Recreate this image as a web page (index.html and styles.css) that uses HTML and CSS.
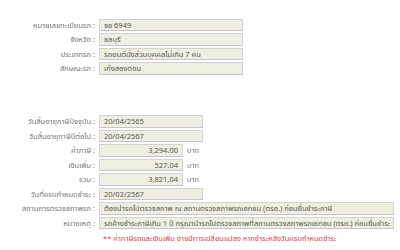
FILE: index.html
```html
<!DOCTYPE html>
<html>
<head>
<meta charset="utf-8">
<link rel="stylesheet" href="styles.css">
</head>
<body>
<div class="form">
  <div class="section first">
    <div class="row"><span class="label">หมายเลขทะเบียนรถ :</span><span class="box w144">จช 6949</span></div>
    <div class="row"><span class="label">จังหวัด :</span><span class="box w144">ชลบุรี</span></div>
    <div class="row"><span class="label">ประเภทรถ :</span><span class="box w144">รถยนต์นั่งส่วนบุคคลไม่เกิน 7 คน</span></div>
    <div class="row"><span class="label">ลักษณะรถ :</span><span class="box w144">เก๋งสองตอน</span></div>
  </div>
  <div class="section second">
    <div class="row"><span class="label">วันสิ้นอายุภาษีปัจจุบัน :</span><span class="box w104">20/04/2565</span></div>
    <div class="row"><span class="label">วันสิ้นอายุภาษีปีต่อไป :</span><span class="box w104">20/04/2567</span></div>
    <div class="row"><span class="label">ค่าภาษี :</span><span class="box w84 num">3,294.00</span><span class="unit">บาท</span></div>
    <div class="row"><span class="label">เงินเพิ่ม :</span><span class="box w84 num">527.04</span><span class="unit">บาท</span></div>
    <div class="row"><span class="label">รวม :</span><span class="box w84 num">3,821.04</span><span class="unit">บาท</span></div>
    <div class="row"><span class="label">วันที่ครบกำหนดชำระ :</span><span class="box w104">20/02/2567</span></div>
    <div class="row"><span class="label">สถานการตรวจสภาพรถ :</span><span class="box wide">ต้องนำรถไปตรวจสภาพ ณ สถานตรวจสภาพรถเอกชน (ตรอ.) ก่อนยื่นชำระภาษี</span></div>
    <div class="row"><span class="label">หมายเหตุ :</span><span class="box wide">รถค้างชำระภาษีเกิน 1 ปี กรุณานำรถไปตรวจสภาพที่สถานตรวจสภาพรถเอกชน (ตรอ.) ก่อนยื่นชำระ</span></div>
    <div class="row note-row"><span class="label"></span><span class="note">** ค่าภาษีรถและเงินเพิ่ม อาจมีการเปลี่ยนแปลง หากชำระหลังวันครบกำหนดชำระ</span></div>
  </div>
</div>
</body>
</html>
```

FILE: styles.css
```css
html, body {
  margin: 0;
  padding: 0;
  background: #ffffff;
}
body {
  font-family: Tahoma, "Noto Sans Thai", "Noto Sans", "DejaVu Sans", sans-serif;
  font-size: 7.5px;
  color: #555555;
}
.form {
  display: flex;
  flex-direction: column;
}
.section {
  display: flex;
  flex-direction: column;
  gap: 2.5px;
}
.section.first {
  padding-top: 19px;
}
.section.second {
  padding-top: 41px;
}
.row {
  display: flex;
  align-items: center;
  height: 12px;
}
.label {
  width: 97px;
  flex: none;
  text-align: right;
  padding-right: 2px;
  box-sizing: border-box;
  white-space: nowrap;
  color: #757575;
}
.box {
  box-sizing: border-box;
  height: 12.5px;
  line-height: 11px;
  background: #efefe1;
  border: 1px solid #d3d1d1;
  border-bottom-color: #cbc0cd;
  padding: 0 4px;
  color: #555555;
  white-space: nowrap;
  overflow: hidden;
  margin-left: 2px;
}
.w144 { width: 144px; }
.w104 { width: 104px; }
.w84 { width: 84px; }
.wide { width: 295px; }
.num { text-align: right; }
.unit {
  margin-left: 4px;
  color: #757575;
}
.note-row {
  margin-top: 1px;
}
.note {
  color: #dc3c3e;
  margin-left: 6px;
  white-space: nowrap;
}
```
